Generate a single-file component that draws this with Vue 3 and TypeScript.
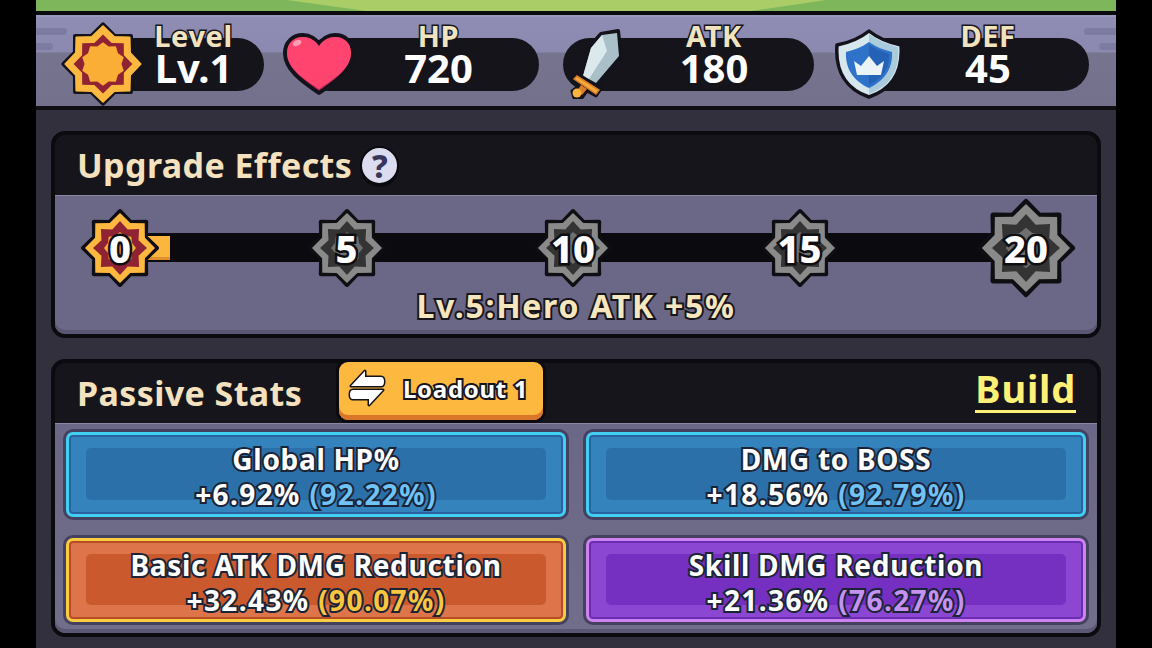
<script setup lang="ts">
const star = (R: number, r: number, cx = 50, cy = 50, n = 8) => {
  const pts: string[] = [];
  for (let i = 0; i < n * 2; i++) {
    const a = (Math.PI * i) / n - Math.PI / 2;
    const d = i % 2 === 0 ? R : r;
    pts.push(`${(cx + d * Math.cos(a)).toFixed(1)},${(cy + d * Math.sin(a)).toFixed(1)}`);
  }
  return pts.join(' ');
};

const milestones = [
  { label: '0', active: true, scale: 1 },
  { label: '5', active: false, scale: 1 },
  { label: '10', active: false, scale: 1 },
  { label: '15', active: false, scale: 1 },
  { label: '20', active: false, scale: 1.26 },
];

const cards = [
  { name: 'Global HP%', value: '+6.92%', pct: '(92.22%)', tone: 'blue' },
  { name: 'DMG to BOSS', value: '+18.56%', pct: '(92.79%)', tone: 'blue' },
  { name: 'Basic ATK DMG Reduction', value: '+32.43%', pct: '(90.07%)', tone: 'orange' },
  { name: 'Skill DMG Reduction', value: '+21.36%', pct: '(76.27%)', tone: 'purple' },
];
</script>

<template>
  <div class="frame">
    <div class="grass"></div>

    <div class="statbar">
      <span class="dash dash-l1"></span><span class="dash dash-l2"></span>
      <span class="dash dash-r1"></span><span class="dash dash-r2"></span>

      <div class="stat stat-level">
        <svg class="icon" width="84" height="84" viewBox="0 0 100 100">
          <polygon :points="star(47, 36)" fill="#14121a" stroke="#14121a" stroke-width="5" stroke-linejoin="round" />
          <polygon :points="star(45, 35)" fill="#fdb840" stroke="#fdb840" stroke-width="2" stroke-linejoin="round" />
          <polygon :points="star(35, 27)" fill="#8f2233" />
          <polygon :points="star(26, 22, 50, 50, 10)" fill="#fbae36" />
        </svg>
        <div class="stat-text">
          <span class="stat-label">Level</span>
          <span class="stat-value">Lv.1</span>
        </div>
      </div>

      <div class="stat stat-hp">
        <svg class="icon" width="74" height="64" viewBox="0 0 74 64">
          <path d="M37 61 C26 53 3 40 3 21 C3 10 11 3 21 3 C28 3 34 7 37 12 C40 7 46 3 53 3 C63 3 71 10 71 21 C71 40 48 53 37 61Z" fill="#c92a5a" stroke="#14121a" stroke-width="4" stroke-linejoin="round" />
          <path d="M37 57 C26 49 5 38 5 21 C5 11 12 5 21 5 C28 5 34 9 37 14 C40 9 46 5 53 5 C62 5 69 11 69 21 C69 38 48 49 37 57Z" fill="#ff4470" />
          <ellipse cx="15" cy="11" rx="4.5" ry="2.8" fill="#ff9db4" transform="rotate(-25 15 11)" />
        </svg>
        <div class="stat-text">
          <span class="stat-label">HP</span>
          <span class="stat-value">720</span>
        </div>
      </div>

      <div class="stat stat-atk">
        <svg class="icon" width="56" height="70" viewBox="568 28 56 70">
          <path d="M601 33 L618 30 L621 56 L597 85 L581 76 L589 46Z" fill="#14121a" stroke="#14121a" stroke-width="4" stroke-linejoin="round" />
          <path d="M602 34 L617 32 L619 55 L596 82 L583 75 L591 47Z" fill="#a9c0c8" />
          <path d="M602 34 L607 50 L589 78 L583 75 L591 47Z" fill="#dbe9ec" />
          <path d="M572 78 L578 73 L601 88 L596 95 L587 90 L582 97 L574 97 L572 90 L579 85Z" fill="#14121a" stroke="#14121a" stroke-width="3" stroke-linejoin="round" />
          <path d="M574 78 L577 75 L599 89 L596 93Z" fill="#f5a93c" stroke="#d97d28" stroke-width="1.5" />
          <path d="M581 84 L587 88 L582 94 L577 90Z" fill="#d97d28" />
          <circle cx="577" cy="92" r="4.5" fill="#fbb23e" />
        </svg>
        <div class="stat-text">
          <span class="stat-label">ATK</span>
          <span class="stat-value">180</span>
        </div>
      </div>

      <div class="stat stat-def">
        <svg class="icon" width="68" height="70" viewBox="835 28 68 70">
          <path d="M869 30 C879 38 890 42 901 44 C903 70 892 88 869 96 C846 88 835 70 837 44 C848 42 859 38 869 30Z" fill="#d7e7ee" stroke="#14121a" stroke-width="3.5" stroke-linejoin="round" />
          <path d="M869 33 C879 40 889 44 898 46 C900 70 890 85 869 93Z" fill="#a9cbdb" />
          <path d="M869 41 C876 46 884 49 892 51 C893 68 884 80 869 87 C854 80 845 68 846 51 C854 49 862 46 869 41Z" fill="#2e73c9" />
          <path d="M869 44 C875 48 883 51 889 53 C890 67 882 78 869 84Z" fill="#2561b4" />
          <path d="M854 60 L861 65 L869 55 L877 65 L884 60 L881 74 L857 74Z" fill="#eaf3f6" />
        </svg>
        <div class="stat-text">
          <span class="stat-label">DEF</span>
          <span class="stat-value">45</span>
        </div>
      </div>
    </div>

    <main class="content">
      <section class="panel">
        <header class="panel-head">
          <h2 class="panel-title">Upgrade Effects</h2>
          <span class="help">?</span>
        </header>
        <div class="panel-body effects">
          <div class="milestones">
            <div class="track"><div class="track-fill"></div></div>
            <div v-for="m in milestones" :key="m.label" class="node">
              <svg width="100" height="100" viewBox="0 0 100 100">
                <g :transform="`translate(50 50) scale(${m.scale}) translate(-50 -50)`">
                  <polygon :points="star(37, 28)" fill="#0f0e13" stroke="#0f0e13" stroke-width="4" stroke-linejoin="round" />
                  <polygon :points="star(35, 27)" :fill="m.active ? '#fdb840' : '#8a8a8a'" stroke-linejoin="round" />
                  <polygon :points="star(27, 20)" :fill="m.active ? '#8f2233' : '#343434'" />
                  <polygon :points="star(16, 13)" :fill="m.active ? '#fbae36' : '#6f6f6f'" />
                </g>
              </svg>
              <span class="node-num">{{ m.label }}</span>
            </div>
          </div>
          <p class="caption">Lv.5:Hero ATK +5%</p>
        </div>
      </section>

      <section class="panel">
        <header class="panel-head passive-head">
          <h2 class="panel-title">Passive Stats</h2>
          <button class="loadout">
            <svg width="38" height="42" viewBox="0 0 38 42">
              <path d="M3 19 L17 4 V10 H33 Q36 10 36 14.5 Q36 19 33 19 Z" fill="#fff" stroke="#14121a" stroke-width="3" stroke-linejoin="round" />
              <path d="M35 23 L21 38 V32 H5 Q2 32 2 27.5 Q2 23 5 23 Z" fill="#fff" stroke="#14121a" stroke-width="3" stroke-linejoin="round" />
            </svg>
            <span>Loadout 1</span>
          </button>
          <a class="build">Build</a>
        </header>
        <div class="panel-body grid">
          <div v-for="c in cards" :key="c.name" class="card" :class="c.tone">
            <div class="card-name">{{ c.name }}</div>
            <div class="card-line">{{ c.value }} <span class="card-pct">{{ c.pct }}</span></div>
          </div>
        </div>
      </section>
    </main>
  </div>
</template>

<style>
html, body {
  margin: 0;
  background: #000;
}
</style>

<style scoped>
.frame {
  width: 1080px;
  height: 648px;
  margin: 0 auto;
  overflow: hidden;
  background: #33303e;
  font-family: "Noto Sans", "Open Sans", sans-serif;
  font-weight: 700;
}
.grass {
  position: relative;
  height: 11px;
  background: #7eb65c;
  border-bottom: 4px solid #0b0a0e;
}
.grass::after {
  content: "";
  position: absolute;
  inset: 0;
  background: #aacd68;
  clip-path: polygon(251px 0, 790px 0, 715px 100%, 330px 100%);
}
.statbar {
  position: relative;
  display: flex;
  height: 84px;
  padding: 7px 0 0 25px;
  background: linear-gradient(#8f8db4 0, #8b89b0 37px, #76748f 38px, #72708b 100%);
  border-bottom: 4px solid #0f0e13;
  box-shadow: inset 0 2px 0 #9a98bd;
}
.dash {
  position: absolute;
  height: 7px;
  background: #7d7ba0;
}
.dash-l1 { left: 0; top: 13px; width: 31px; border-radius: 0 4px 4px 0; }
.dash-l2 { left: 0; top: 28px; width: 17px; border-radius: 0 4px 4px 0; }
.dash-r1 { right: 0; top: 13px; width: 32px; border-radius: 4px 0 0 4px; }
.dash-r2 { right: 0; top: 28px; width: 17px; border-radius: 4px 0 0 4px; }

.stat {
  position: relative;
  display: flex;
  height: 84px;
  align-items: center;
}
.stat::before {
  content: "";
  position: absolute;
  top: 16px;
  right: 0;
  height: 53px;
  background: #16141b;
  border-radius: 27px;
}
.icon {
  position: relative;
  flex: none;
}
.stat-text {
  position: relative;
  flex: 1;
  align-self: flex-start;
  display: flex;
  flex-direction: column;
  align-items: center;
}
.stat-label {
  height: 27px;
  line-height: 27px;
  font-size: 29px;
  letter-spacing: 0.6px;
  color: #f1e3bd;
  -webkit-text-stroke: 3px #17151c;
  paint-order: stroke fill;
}
.stat-value {
  line-height: 38px;
  font-size: 40px;
  color: #fff;
}
.stat-level { width: 203px; }
.stat-level::before { left: 40px; }
.stat-level .stat-text { padding-right: 22px; }
.stat-hp { width: 257px; margin-left: 18px; }
.stat-hp::before { left: 20px; }
.stat-hp .stat-text { padding-right: 18px; }
.stat-atk { width: 251px; margin-left: 24px; }
.stat-atk::before { left: 0; }
.stat-atk .icon { margin-left: 5px; }
.stat-atk .stat-text { padding-right: 10px; }
.stat-def { width: 254px; margin-left: 21px; }
.stat-def::before { left: 25px; }
.stat-def .stat-text { padding-right: 16px; }

.content {
  display: flex;
  flex-direction: column;
  gap: 21px;
  padding: 21px 15px 0;
}
.panel {
  border: 4px solid #0b0a0e;
  border-radius: 14px;
  background: #17151c;
}
.panel-head {
  display: flex;
  align-items: center;
  height: 60px;
  padding-left: 22px;
}
.panel-title {
  margin: 0;
  font-size: 34px;
  font-weight: 700;
  color: #f3e2bd;
  letter-spacing: 0.4px;
}
.help {
  width: 35px;
  height: 35px;
  margin-left: 8px;
  border-radius: 50%;
  background: #dcdcf0;
  border: 2px solid #0b0a0e;
  box-shadow: 0 2px 0 #0b0a0e;
  color: #38365a;
  font-size: 32px;
  font-weight: 800;
  line-height: 35px;
  text-align: center;
}
.panel-body {
  border-radius: 0 0 10px 10px;
  background: #6b6786;
  border-top: 1px solid #8a87a4;
  box-shadow: inset 0 -4px 0 #5a5772;
}
.effects {
  height: 138px;
}
.milestones {
  position: relative;
  display: flex;
  justify-content: space-between;
  height: 100px;
  margin: 2px 21px 0 15px;
}
.track {
  position: absolute;
  left: 50px;
  right: 50px;
  top: 35px;
  height: 29px;
  background: #0b0a0e;
}
.track-fill {
  width: 50px;
  height: 24px;
  margin-top: 3px;
  background: #fbb63f;
  box-shadow: inset 0 -3px 0 #e08f2c;
}
.node {
  position: relative;
  width: 100px;
  height: 100px;
}
.node svg {
  display: block;
}
.node-num {
  position: absolute;
  inset: 0;
  text-align: center;
  line-height: 100px;
  font-size: 38px;
  font-weight: 800;
  color: #fff;
  -webkit-text-stroke: 5px #0f0e13;
  paint-order: stroke fill;
}
.caption {
  margin: -10px 0 0;
  text-align: center;
  line-height: 36px;
  font-size: 32px;
  letter-spacing: 1.7px;
  color: #f6e6bd;
  -webkit-text-stroke: 4px #17151c;
  paint-order: stroke fill;
}
.passive-head {
  position: relative;
}
.loadout {
  position: absolute;
  left: 284px;
  top: -1px;
  display: flex;
  align-items: center;
  gap: 17px;
  width: 204px;
  height: 58px;
  padding: 0 0 6px 9px;
  border: none;
  border-radius: 9px;
  background: #fdb840;
  box-shadow: inset 0 -5px 0 #d9762a, 0 0 0 3px #0b0a0e;
  font: inherit;
  font-size: 24px;
  letter-spacing: 0.7px;
  color: #fff;
  -webkit-text-stroke: 4px #17151c;
  paint-order: stroke fill;
}
.loadout svg {
  flex: none;
}
.build {
  position: absolute;
  right: 21px;
  top: 3px;
  border-bottom: 3px solid #fff176;
  font-size: 38px;
  letter-spacing: 0.8px;
  line-height: 44px;
  color: #fff176;
  -webkit-text-stroke: 4px #17151c;
  paint-order: stroke fill;
}
.grid {
  display: grid;
  grid-template-columns: 1fr 1fr;
  grid-auto-rows: 1fr;
  gap: 21px 20px;
  height: 190px;
  padding: 8px 11px 11px;
  background: linear-gradient(#6b6786, #706e8a);
}
.card {
  position: relative;
  display: flex;
  flex-direction: column;
  align-items: center;
  justify-content: center;
  padding-top: 5px;
  border: 3px solid;
  border-radius: 7px;
  box-shadow: 0 0 0 3px #44415f;
  font-size: 28px;
  letter-spacing: 0.7px;
  line-height: 36px;
  color: #fff;
  -webkit-text-stroke: 4px #1b2436;
  paint-order: stroke fill;
}
.card::before {
  content: "";
  position: absolute;
  inset: 13px 17px 14px;
  border-radius: 5px;
}
.card-name, .card-line {
  position: relative;
}
.card-line {
  margin-top: -1px;
  letter-spacing: 1.4px;
}
.card.blue {
  border-color: #42d0f2;
  background: #3483bd;
  box-shadow: 0 0 0 3px #44415f, inset 0 0 0 2px #2a62a0;
}
.card.blue::before { background: #2c70aa; }
.card.blue .card-pct { color: #6fc3f6; }
.card.orange {
  border-color: #fbcb42;
  background: #de7449;
  box-shadow: 0 0 0 3px #44415f, inset 0 0 0 2px #b94b26;
}
.card.orange::before { background: #ca5a2e; }
.card.orange .card-pct { color: #fbc63f; }
.card.purple {
  border-color: #cc82ef;
  background: #8c47d2;
  box-shadow: 0 0 0 3px #44415f, inset 0 0 0 2px #6a2cb0;
}
.card.purple::before { background: #7530c2; }
.card.purple .card-pct { color: #c592f2; }
</style>
